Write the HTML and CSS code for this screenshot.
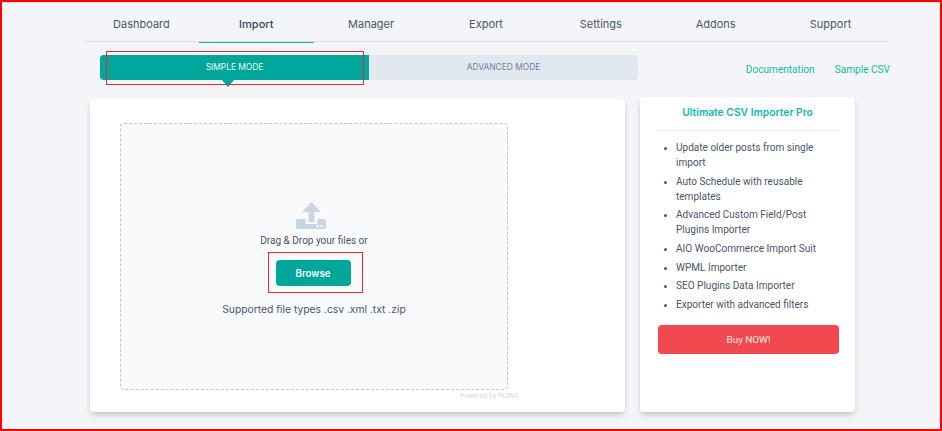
FILE: index.html
```html
<!DOCTYPE html>
<html lang="en">
<head>
<meta charset="utf-8">
<title>Ultimate CSV Importer</title>
<link rel="stylesheet" href="styles.css">
</head>
<body>
<div class="frame">
  <nav class="nav">
    <a class="nav-item">Dashboard</a>
    <a class="nav-item active">Import</a>
    <a class="nav-item">Manager</a>
    <a class="nav-item">Export</a>
    <a class="nav-item">Settings</a>
    <a class="nav-item">Addons</a>
    <a class="nav-item">Support</a>
  </nav>
  <div class="mode-row">
    <div class="tabs">
      <div class="tab tab-on">SIMPLE MODE</div>
      <div class="tab tab-off">ADVANCED MODE</div>
    </div>
    <div class="links">
      <a class="link">Documentation</a>
      <a class="link">Sample CSV</a>
    </div>
  </div>
  <div class="content">
    <section class="card upload">
      <div class="dropzone">
        <svg class="upload-icon" width="30" height="27" viewBox="0 0 30 27">
          <path fill="#c9d5e2" d="M15.500 0 L25 10 H18.500 V20 H12.500 V10 H6 Z"/>
          <path fill="#c9d5e2" d="M2 17 H9.500 V22 H21.500 V17 H28 Q30 17 30 19 V25 Q30 27 28 27 H2 Q0 27 0 25 V19 Q0 17 2 17 Z"/>
          <circle cx="21.500" cy="24.200" r="1.100" fill="#fff"/>
          <circle cx="25.500" cy="24.200" r="1.100" fill="#fff"/>
        </svg>
        <p class="drag">Drag &amp; Drop your files or</p>
        <button class="browse">Browse</button>
        <p class="types">Supported file types .csv .xml .txt .zip</p>
      </div>
      <span class="powered">Powered by PQINA</span>
    </section>
    <aside class="card pro">
      <h2 class="pro-title">Ultimate CSV Importer Pro</h2>
      <ul class="features">
        <li>Update older posts from single import</li>
        <li>Auto Schedule with reusable templates</li>
        <li>Advanced Custom Field/Post Plugins Importer</li>
        <li>AIO WooCommerce Import Suit</li>
        <li>WPML Importer</li>
        <li>SEO Plugins Data Importer</li>
        <li>Exporter with advanced filters</li>
      </ul>
      <button class="buy">Buy NOW!</button>
    </aside>
  </div>
  <div class="mark mark-tab"></div>
  <div class="mark mark-browse"></div>
</div>
</body>
</html>
```

FILE: styles.css
```css
* { box-sizing: border-box; }
html, body { margin: 0; height: 100%; }
body {
  background: #fff;
  font-family: Roboto, "Liberation Sans", sans-serif;
  overflow: hidden;
}
.frame {
  position: relative;
  width: 942px;
  height: 431px;
  border: 2px solid #f00;
  background: #f3f5f9;
  padding: 2px 0 0 0;
  box-shadow: inset 0 1px 0 #dcdfe4;
}
.nav {
  display: grid;
  grid-template-columns: repeat(7, 1fr);
  margin: 0 52px 0 82px;
  height: 38px;
  border-bottom: 1.500px solid #dcdfe6;
  padding-top: 1px;
}
.nav-item {
  font-family: Inter, "Open Sans", sans-serif;
  font-size: 11px;
  color: #4a5568;
  text-align: center;
  line-height: 38px;
  height: 37.500px;
}
.nav-item.active {
  border-bottom: 1.500px solid #2eaa9f;
  color: #3d4757;
  font-weight: 500;
}
.mode-row {
  display: flex;
  align-items: flex-start;
  margin: 13px 50px 0 98px;
  justify-content: space-between;
}
.tabs {
  display: flex;
  width: 538px;
  height: 25px;
  border-radius: 4px;
  background: #e2e8f0;
}
.tab {
  font-family: Inter, "Open Sans", sans-serif;
  font-size: 8.400px;
  line-height: 25px;
  text-align: center;
  width: 269px;
}
.tab-on {
  position: relative;
  background: #00a699;
  color: #e9fbf8;
  border-radius: 4px 0 0 4px;
}
.tab-on::after {
  content: "";
  position: absolute;
  left: 122px;
  top: 25px;
  border: 6px solid transparent;
  border-top: 7px solid #00a699;
  border-bottom: 0;
}
.tab-off { color: #718096; }
.links {
  display: flex;
  gap: 20px;
  padding-top: 8px;
}
.link {
  font-size: 10.100px;
  line-height: 13px;
  color: #14b8a6;
}
.content {
  display: flex;
  align-items: flex-end;
  margin: 17px 0 0 88px;
  gap: 15px;
}
.card {
  background: #fff;
  border-radius: 4px;
  box-shadow: 0 4px 6px -1px rgba(0,0,0,.16), 0 2px 4px -1px rgba(0,0,0,.08);
}
.upload {
  position: relative;
  width: 535px;
  height: 313px;
  padding: 24px 117px 22px 30px;
}
.dropzone {
  height: 267px;
  border: 1px dashed #b9c9d6;
  border-radius: 4px;
  background: #f9fafc;
  display: flex;
  flex-direction: column;
  align-items: center;
  padding-top: 78px;
}
.upload-icon { display: block; margin-right: 6px; }
.drag {
  margin: 5px 0 0;
  font-size: 10px;
  line-height: 13px;
  color: #4a5568;
}
.browse {
  margin: 13px 2px 0 0;
  width: 75px;
  height: 26px;
  border: 0;
  border-radius: 4px;
  background: #00a699;
  color: #f0fdfa;
  font-family: Inter, Roboto, sans-serif;
  font-weight: 600;
  font-size: 9.700px;
  padding: 0;
}
.types {
  margin: 16px 0 0;
  font-family: Inter, "Open Sans", sans-serif;
  font-size: 10.300px;
  line-height: 14px;
  color: #4a5568;
}
.powered {
  position: absolute;
  left: 370px;
  top: 293px;
  font-size: 7px;
  line-height: 9px;
  color: #d8d8d8;
}
.pro {
  width: 215px;
  height: 315px;
  padding: 8px 16px 0;
}
.pro-title {
  margin: 0;
  padding-bottom: 11px;
  font-family: Inter, "Open Sans", sans-serif;
  font-weight: 600;
  font-size: 10.300px;
  line-height: 14px;
  color: #14b8a6;
  text-align: center;
  border-bottom: 1px solid #dff3f4;
}
.features {
  margin: 9px 0 0;
  padding: 0 0 0 20px;
  list-style: disc;
  font-size: 10.050px;
  line-height: 15px;
  color: #4a5568;
}
.features li { margin-bottom: 3.700px; }
.features li::marker { font-size: 9px; }
.buy {
  display: block;
  width: 181px;
  height: 29px;
  margin: 13px 0 0 2px;
  border: 0;
  border-radius: 4px;
  background: #f1494f;
  color: #fde8e8;
  font-family: Roboto, sans-serif;
  font-size: 9.900px;
  padding: 0;
}
.mark {
  position: absolute;
  border: 1.500px solid #f0262b;
}
.mark-tab {
  left: 104px;
  top: 49px;
  width: 258px;
  height: 34px;
}
.mark-browse {
  left: 266px;
  top: 250px;
  width: 95px;
  height: 41px;
}
```
